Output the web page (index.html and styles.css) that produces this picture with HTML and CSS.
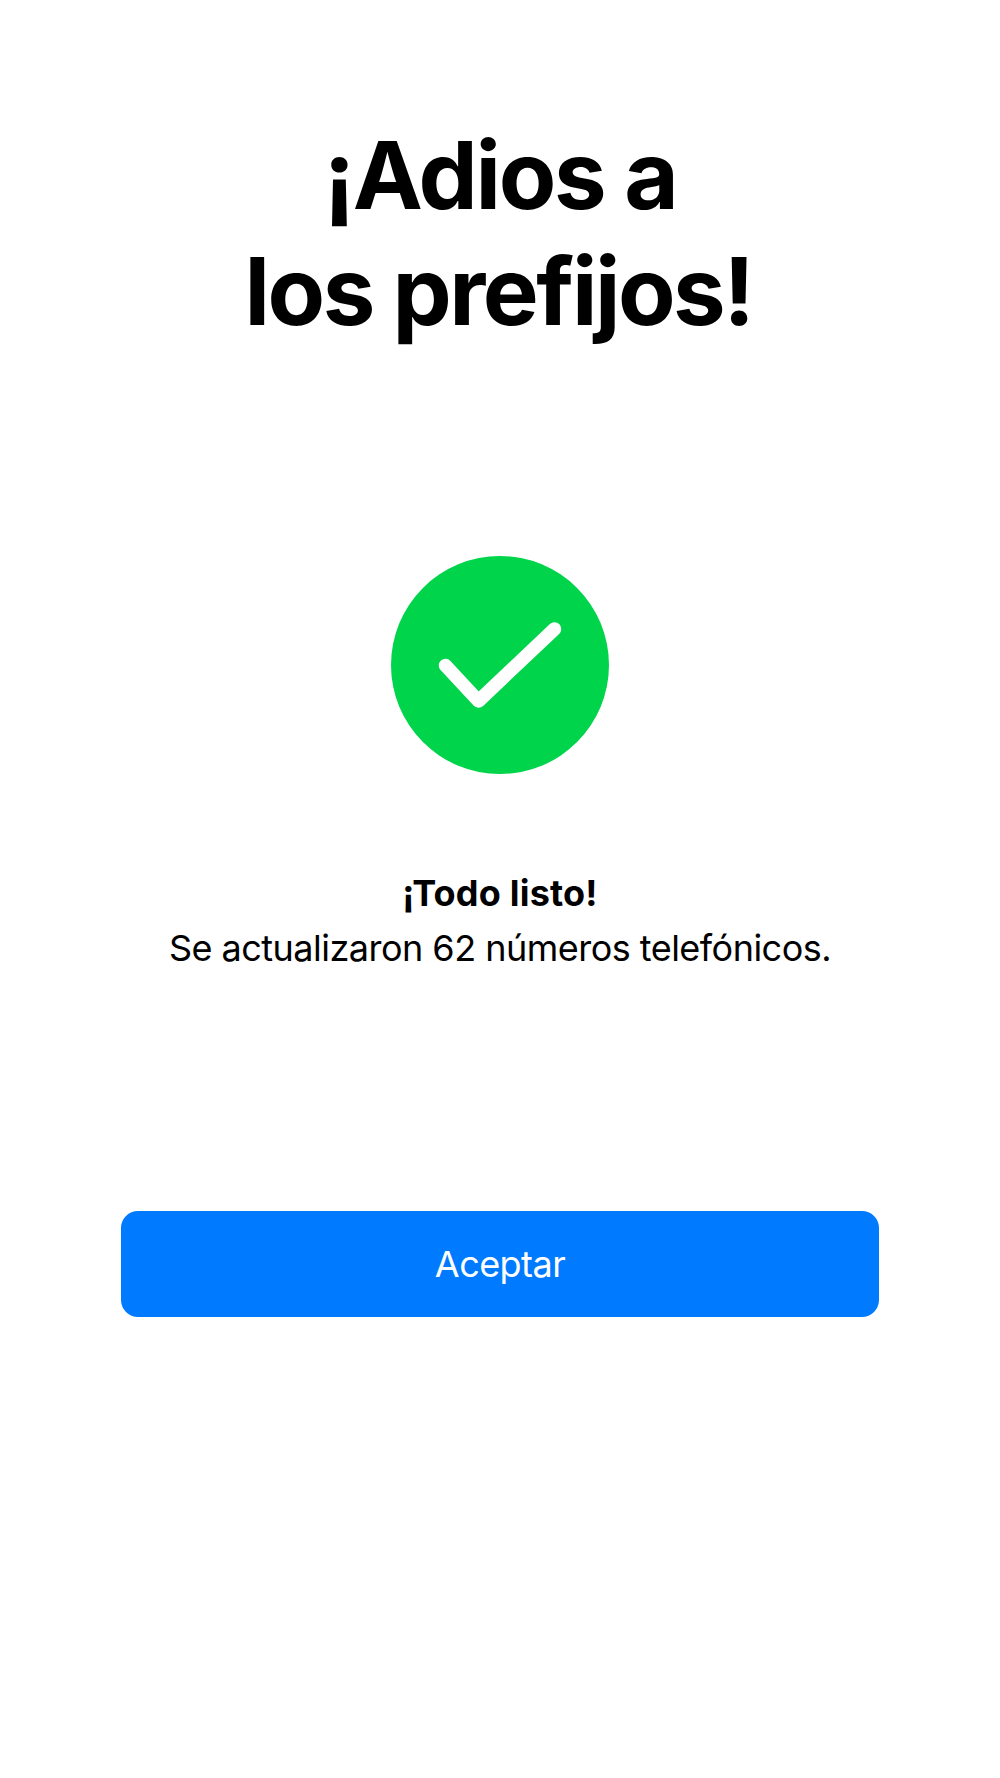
FILE: index.html
```html
<!DOCTYPE html>
<html lang="es">
<head>
<meta charset="utf-8">
<title>¡Adios a los prefijos!</title>
<link rel="stylesheet" href="styles.css">
</head>
<body>
<main class="screen">
  <h1 class="title"><span class="title-line first">¡Adios a</span><span class="title-line second">los prefijos!</span></h1>
  <svg class="success" viewBox="0 0 218 218" aria-hidden="true">
    <circle cx="109" cy="109" r="109" fill="#00d44b"/>
    <path d="M54.5 109.500 L87.5 145 L163.500 73" fill="none" stroke="#fff" stroke-width="13.5" stroke-linecap="round" stroke-linejoin="round"/>
  </svg>
  <section class="message">
    <h2 class="message-title">¡Todo listo!</h2>
    <p class="message-text">Se actualizaron 62 números telefónicos.</p>
  </section>
  <button class="accept">Aceptar</button>
</main>
</body>
</html>
```

FILE: styles.css
```css
* { box-sizing: border-box; }
body { margin: 0; background: #fff; color: #000; font-family: Inter, "Liberation Sans", sans-serif; }
.screen { display: flex; flex-direction: column; align-items: center; width: 1000px; height: 1778px; padding-top: 117px; }
.title { margin: 0; font-size: 94px; font-weight: 700; line-height: 116px; text-align: center; white-space: nowrap; }
.title-line { display: block; }
.first { letter-spacing: -2.3px; }
.second { letter-spacing: -2.5px; padding-right: 3px; }
.success { width: 218px; height: 218px; margin-top: 207px; }
.message { margin-top: 92px; text-align: center; font-size: 36px; line-height: 55px; white-space: nowrap; }
.message-title { margin: 0; font-size: 36px; font-weight: 700; letter-spacing: 0.2px; }
.message-text { margin: 0; letter-spacing: -0.52px; }
.accept { width: 758px; height: 106px; margin-top: 235px; border: 0; border-radius: 17px; background: #007aff; color: #fff; font: 400 36px Inter, "Liberation Sans", sans-serif; letter-spacing: -0.55px; }
```
